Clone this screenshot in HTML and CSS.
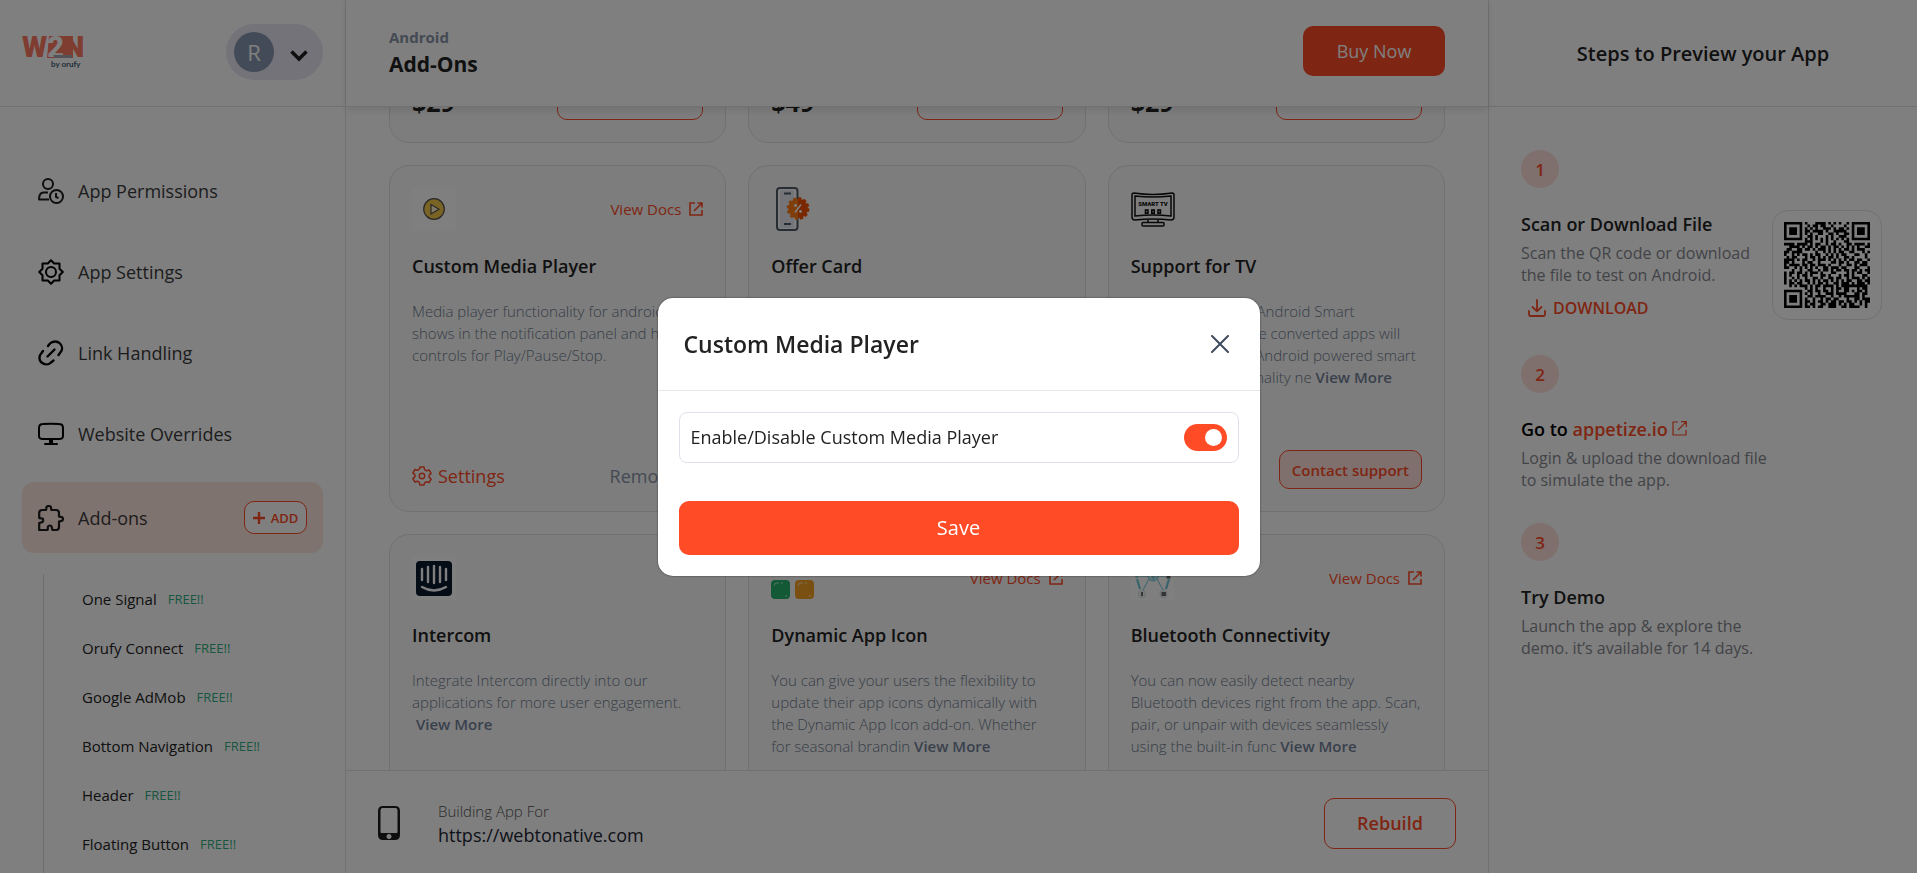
FILE: index.html
```html
<!DOCTYPE html>
<html lang="en">
<head>
<meta charset="utf-8">
<title>Add-Ons</title>
<link rel="stylesheet" href="styles.css">
</head>
<body>
<svg class="sprite" aria-hidden="true">
  <symbol id="i-ext" viewBox="0 0 14 14"><path d="M6 1H1v12h12V8M8.500 1H13v4.500M13 1 5 9" fill="none" stroke="currentColor" stroke-width="1.600"/></symbol>
</svg>
<div class="app">
  <aside class="sidebar">
    <div class="brand">
      <svg class="logo" viewBox="0 0 64 35" role="img" aria-label="W2N by orufy">
        <path d="M27 1h24v22H25z" fill="#ff7862"/>
        <text x="0" y="22" font-family="Roboto, sans-serif" font-weight="900" font-size="29" fill="#ff7862">W<tspan fill="#fff">2</tspan>N</text>
        <path d="M31 20h19v3H33z" fill="#a9a5ae"/>
        <text x="29" y="32" font-family="Lato, sans-serif" font-weight="700" font-size="8" fill="#3f5b78">by orufy</text>
      </svg>
      <button class="account" aria-label="Account"><span class="avatar">R</span>
        <svg width="20" height="20" viewBox="0 0 20 20"><path d="m2.500 9.500 7.500 7.500 7.500-7.500" fill="none" stroke="#1c1c1e" stroke-width="3.400"/></svg>
      </button>
    </div>
    <nav class="nav">
      <a class="nav-item" href="#">
        <svg class="nav-icon" viewBox="0 0 26 26" fill="none" stroke="#1c1c1e" stroke-width="2"><circle cx="10" cy="6" r="5"/><circle cx="18.500" cy="18.500" r="6.500"/><path d="M18 15v4l2.500 1M10 14.500H5.500c-3 0-4.500 3-4.500 7h10" stroke-linejoin="round"/></svg>
        App Permissions</a>
      <a class="nav-item" href="#">
        <svg class="nav-icon" viewBox="0 0 26 26" fill="none" stroke="#000" stroke-width="2" stroke-linejoin="round"><circle cx="13" cy="13" r="5"/><path d="m13 1.200 3.200 3.300h5.300v5.300l3.300 3.200-3.300 3.200v5.300h-5.300L13 24.800l-3.200-3.300H4.500v-5.300L1.200 13l3.300-3.200V4.500h5.300z"/></svg>
        App Settings</a>
      <a class="nav-item" href="#">
        <svg class="nav-icon" viewBox="0 0 26 26" fill="none" stroke="#000" stroke-width="2.400" stroke-linecap="round"><path d="m9.500 16.500 7-7M10 6l2-2.500c2.500-2.500 7-3 10 0s2.500 7 0 9.500L20.500 15M5 11l-1.500 2c-2.500 2.500-3 7 0 9.500s7 2.500 9.500 0l2.500-2"/></svg>
        Link Handling</a>
      <a class="nav-item" href="#">
        <svg class="nav-icon" viewBox="0 0 26 26" fill="none" stroke="#000" stroke-width="2"><path d="M5 3q8-.6 16 0 4 0 4 4v8q0 3-4 3H5q-4 0-4-3V7q0-4 4-4z"/><path d="M13 18v4" stroke-width="4"/><path d="M7 23h12" stroke-linecap="round"/></svg>
        Website Overrides</a>
      <div class="nav-item is-active">
        <svg class="nav-icon" viewBox="0 0 26 26" fill="none" stroke="#1c1c1e" stroke-width="2.200" stroke-linejoin="round"><path d="M1.200 8q0-3 3-3H8c1-1-1-4 2.700-4s1.700 3 2.700 4H18q3 0 3 3v3.500c1 1 4-.8 4 2.500s-3 1.500-4 2.500V22q0 3-3 3h-3.500c-1-1 .5-4.500-2.700-4.500S10.500 24 9.500 25H1.200v-7c1-1 4 .5 4-2.700s-3-1.300-4-2.300z"/></svg>
        <a href="#">Add-ons</a>
        <button class="add"><svg width="12" height="12" viewBox="0 0 12 12"><path d="M6 0v12M0 6h12" stroke="currentColor" stroke-width="2.400"/></svg>ADD</button>
      </div>
      <ul class="subnav">
        <li><a href="#">One Signal</a><span>FREE!!</span></li>
        <li><a href="#">Orufy Connect</a><span>FREE!!</span></li>
        <li><a href="#">Google AdMob</a><span>FREE!!</span></li>
        <li><a href="#">Bottom Navigation</a><span>FREE!!</span></li>
        <li><a href="#">Header</a><span>FREE!!</span></li>
        <li><a href="#">Floating Button</a><span>FREE!!</span></li>
      </ul>
    </nav>
  </aside>

  <main class="main">
    <header class="topbar">
      <div><p class="platform">Android</p><h1 class="page-title">Add-Ons</h1></div>
      <button class="buy">Buy Now</button>
    </header>
    <div class="scroller" id="scroller">
      <div class="cards">
        <article class="card"><div class="card-foot priced"><b class="price">$29</b><button class="outline" aria-label="Add"></button></div></article>
        <article class="card"><div class="card-foot priced"><b class="price">$49</b><button class="outline" aria-label="Add"></button></div></article>
        <article class="card"><div class="card-foot priced"><b class="price">$29</b><button class="outline" aria-label="Add"></button></div></article>

        <article class="card">
          <div class="card-head">
            <svg class="card-icon" viewBox="0 0 44 44"><path d="M0 0h44v44H0z" fill="#fff"/><circle cx="22" cy="22" r="10.300" fill="#f2c84b" stroke="#55504a" stroke-width="1.200"/><path d="M19 17.500v9.500l8-4.700z" fill="#fff5d0" stroke="#55504a" stroke-width="1.200"/></svg>
            <a class="docs" href="#">View Docs <svg width="14" height="14"><use href="#i-ext"/></svg></a>
          </div>
          <h2>Custom Media Player</h2>
          <p>Media player functionality for android<br>shows in the notification panel and has<br>controls for Play/Pause/Stop.</p>
          <div class="card-foot">
            <a class="settings" href="#"><svg width="20" height="20" viewBox="0 0 20 20" fill="none" stroke="currentColor" stroke-width="1.500" stroke-linejoin="round"><circle cx="10" cy="10" r="2.700"/><path d="M8 1h4l.6 2.700 1.900 1.100 2.600-.8 2 3.400-2 1.900v1.900l2 1.900-2 3.400-2.600-.8-1.900 1.100L12 19H8l-.6-2.700-1.900-1.100-2.600.8-2-3.400 2-1.900V8.800l-2-1.900 2-3.400 2.600.8 1.900-1.100z"/></svg>Settings</a>
            <a class="remove" href="#">Remove</a>
          </div>
        </article>
        <article class="card">
          <div class="card-head">
            <svg class="card-icon" viewBox="0 0 44 44"><rect x="6" y="1" width="20.500" height="42" rx="3" fill="#fff" stroke="#505a68" stroke-width="2"/><path d="M16 3v38" stroke="#e6ebf2" stroke-width="14"/><path d="M13 6.500h7M13 37h7" stroke="#505a68" stroke-width="2.200"/><circle cx="27" cy="21.500" r="9.800" fill="#ff7a12" stroke="#ff7a12" stroke-width="3" stroke-dasharray="3 2.130"/><path d="M27 11.700a9.800 9.800 0 0 1 0 19.600z" fill="#f25100"/><path d="M27 11.700a9.800 9.800 0 0 1 0 19.600" fill="none" stroke="#f25100" stroke-width="3" stroke-dasharray="3 2.130"/><path d="m24 25.500 6-8" stroke="#fff" stroke-width="1.600"/><circle cx="24.500" cy="18.500" r="1.400" fill="#fff"/><circle cx="29.500" cy="24.500" r="1.400" fill="#fff"/></svg>
          </div>
          <h2>Offer Card</h2>
        </article>
        <article class="card">
          <div class="card-head">
            <svg class="card-icon" viewBox="0 0 44 44" fill="none" stroke="#111" stroke-width="1.500"><path d="M3 6q19 3 38 0 2 0 2 2v22q0 3-3 3-18-2-36 0-3 0-3-3V8q0-2 2-2zM4 9q18 2 36 0v20q-18-2-36 0zM17 33v3M27 33v3"/><rect x="11" y="35.500" width="22" height="3.500" rx="1"/><text x="22" y="19" text-anchor="middle" font-family="Roboto, sans-serif" font-weight="900" font-size="6" fill="#111" stroke="none">SMART TV</text><g stroke-width="1.600"><rect x="14.500" y="23" width="2.400" height="3.200"/><rect x="20.800" y="23" width="2.400" height="3.200"/><rect x="27" y="23" width="2.400" height="3.200"/></g></svg>
          </div>
          <h2>Support for TV</h2>
          <p>Reach all users on Android Smart<br>TVs as well. Now the converted apps will<br>also run on all the Android powered smart<br>TVs with all functionality ne <b>View More</b></p>
          <div class="card-foot end"><button class="contact">Contact support</button></div>
        </article>

        <article class="card">
          <div class="card-head">
            <svg class="card-icon" viewBox="0 0 44 44"><path d="M0 0h44v44H0z" fill="#fff"/><rect x="4" y="5" width="36" height="35" rx="4" fill="#08182c"/><path d="M10 13v11M16 11v15M22 10v17M28 11v15M34 13v11M10 31q12 7 24 0" fill="none" stroke="#fff" stroke-width="2.400" stroke-linecap="round"/></svg>
          </div>
          <h2>Intercom</h2>
          <p>Integrate Intercom directly into our<br>applications for more user engagement.<br>&nbsp;<b>View More</b></p>
        </article>
        <article class="card">
          <div class="card-head">
            <svg class="card-icon" viewBox="0 0 44 44"><rect x="0" y="0" width="19" height="19" rx="4" fill="#3b82f6"/><rect x="24" y="0" width="19" height="19" rx="4" fill="#ef4444"/><rect x="0" y="24" width="19" height="19" rx="4" fill="#26b26b"/><rect x="24" y="24" width="19" height="19" rx="4" fill="#f3a024"/><path d="M3 30q0-3 3-3h2M10 27h2M27 30q0-3 3-3h2M34 27h2M14 40h2M38 40h2" fill="none" stroke="#fff" stroke-opacity=".6"/></svg>
            <a class="docs" href="#">View Docs <svg width="14" height="14"><use href="#i-ext"/></svg></a>
          </div>
          <h2>Dynamic App Icon</h2>
          <p>You can give your users the flexibility to<br>update their app icons dynamically with<br>the Dynamic App Icon add-on. Whether<br>for seasonal brandin <b>View More</b></p>
        </article>
        <article class="card">
          <div class="card-head">
            <svg class="card-icon" viewBox="0 0 44 44"><path d="M0 0h44v44H0z" fill="#fff"/><g fill="none" stroke="#6fc7d6"><circle cx="22" cy="20" r="5" fill="#c9eef4"/><path d="M20 17.500l4 4-2 2v-7l2 2-4 4M18 23l-6 11M26 23l6 11M17 20h-8M27 20h8M22 15V7"/><path d="M6 23l3 10M38 23l-3 10M7 14l4-6M37 14l-4-6" stroke-width="2.200"/></g><g fill="#f3f6f7" stroke="#cfe0e4"><circle cx="11" cy="38" r="3.600"/><circle cx="32.500" cy="38" r="3.600"/></g><path d="M10 36h2v4h-2zM30.500 36h4.500v4h-4.500zM35.500 18.500h4v4h-4z" fill="#666"/><circle cx="6" cy="20" r="2" fill="#8ed4df"/></svg>
            <a class="docs" href="#">View Docs <svg width="14" height="14"><use href="#i-ext"/></svg></a>
          </div>
          <h2>Bluetooth Connectivity</h2>
          <p>You can now easily detect nearby<br>Bluetooth devices right from the app. Scan,<br>pair, or unpair with devices seamlessly<br>using the built-in func <b>View More</b></p>
        </article>
      </div>
    </div>
    <footer class="build">
      <svg width="22" height="34" viewBox="0 0 22 34"><path fill-rule="evenodd" d="M5 0h12q5 0 5 5v24q0 5-5 5H5q-5 0-5-5V5q0-5 5-5zM4.500 2Q2.500 2 2.500 5v21q0 1 1 1h15q1 0 1-1V5q0-3-2-3zM11 28a2.500 2.500 0 1 0 .01 0z" fill="#1c1c1e"/></svg>
      <div class="build-text"><p>Building App For</p><strong>https://webtonative.com</strong></div>
      <button class="rebuild">Rebuild</button>
    </footer>
  </main>

  <aside class="steps">
    <h2 class="steps-title">Steps to Preview your App</h2>
    <ol class="steps-list">
      <li>
        <span class="num">1</span>
        <div class="scan">
          <div><h3>Scan or Download File</h3>
            <p>Scan the QR code or download<br>the file to test on Android.</p>
            <button class="download"><svg width="18" height="18" viewBox="0 0 18 18" fill="none" stroke="currentColor" stroke-width="1.800" stroke-linecap="round" stroke-linejoin="round"><path d="M9 1v11M4.500 8 9 12.300 13.500 8M1 12v3.500Q1 17 2.500 17h13q1.500 0 1.500-1.500V12"/></svg>DOWNLOAD</button>
          </div>
          <div class="qr"><svg viewBox="0 0 33 33" role="img" aria-label="QR code"><path id="qr-path"/></svg></div>
        </div>
      </li>
      <li>
        <span class="num">2</span>
        <h3 class="goto">Go to <a href="#">appetize.io <svg width="15" height="15" viewBox="0 0 15 15"><path d="M6 1H1v13h13V9M9 .7h5.300V6M14.300.7 6 9" fill="none" stroke="currentColor" stroke-width="1.200"/></svg></a></h3>
        <p>Login &amp; upload the download file<br>to simulate the app.</p>
      </li>
      <li>
        <span class="num">3</span>
        <h3>Try Demo</h3>
        <p>Launch the app &amp; explore the<br>demo. it’s available for 14 days.</p>
      </li>
    </ol>
  </aside>
</div>

<div class="overlay">
  <section class="modal" role="dialog" aria-labelledby="modal-title">
    <header class="modal-head">
      <h2 id="modal-title">Custom Media Player</h2>
      <button class="close" aria-label="Close"><svg width="18" height="18" viewBox="0 0 18 18"><path d="m1 1 16 16M17 1 1 17" stroke="#3f4a5a" stroke-width="2" stroke-linecap="round"/></svg></button>
    </header>
    <div class="modal-body">
      <label class="option" for="enable">Enable/Disable Custom Media Player<input class="toggle" id="enable" type="checkbox" checked></label>
      <button class="save">Save</button>
    </div>
  </section>
</div>
<script src="app.js"></script>
</body>
</html>
```

FILE: styles.css
```css
* { box-sizing: border-box; }
body, h1, h2, h3, p, ol, ul { margin: 0; padding: 0; }
ol, ul { list-style: none; }
body { font-family: "Open Sans", "Noto Sans", sans-serif; font-size: 16px; color: #222; background: #fff; }
a { color: inherit; text-decoration: none; }
button { font: inherit; color: inherit; background: none; border: 0; padding: 0; cursor: pointer; }
svg { flex: none; }
.sprite { display: none; }

.app { display: grid; grid-template-columns: 346px 1fr 429px; height: 100vh; overflow: hidden; }

.sidebar { border-right: 1px solid #e2e2e2; overflow: hidden; }
.brand { display: flex; align-items: center; justify-content: space-between; height: 107px; padding: 0 22px 2px; border-bottom: 1px solid #e2e2e2; }
.logo { width: 64px; height: 35px; overflow: visible; }
.account { display: flex; align-items: center; gap: 15px; width: 97px; height: 56px; padding: 0 8px; border-radius: 28px; background: #e6e7f2; }
.avatar { width: 40px; height: 40px; border-radius: 50%; background: #8797b0; color: #fff; font-size: 22px; line-height: 40px; }
.nav { display: flex; flex-direction: column; gap: 10px; padding: 48px 22px 0; }
.nav-item { display: flex; align-items: center; gap: 14px; height: 71px; padding: 0 16px; font-size: 18px; color: #3a3a3c; }
.nav-icon { width: 26px; height: 26px; }
.is-active { background: #ffe6df; border-radius: 12px; margin-top: 3px; }
.add { display: flex; align-items: center; justify-content: center; gap: 6px; width: 63px; height: 33px; margin-left: auto; border: 1px solid #ff4b26; border-radius: 10px; background: #fff; color: #ff4b26; font-size: 13px; font-weight: 600; }
.subnav { margin: 11px 0 0 21px; padding: 0 0 22px 38px; border-left: 1px solid #dcdcdc; }
.subnav li { display: flex; align-items: center; gap: 11px; height: 49px; font-size: 15px; }
.subnav span { font-size: 13px; color: #2fae7f; }

.main { display: flex; flex-direction: column; min-width: 0; min-height: 0; }
.topbar { position: relative; display: flex; align-items: center; justify-content: space-between; height: 107px; flex: none; padding: 0 43px 4px; border-bottom: 1px solid #e2e2e2; box-shadow: 0 3px 8px rgba(0, 0, 0, .1); }
.platform { font-size: 15px; font-weight: 700; line-height: 26px; color: #8894a8; }
.page-title { font-size: 21px; font-weight: 700; line-height: 28px; }
.buy { width: 142px; height: 50px; border-radius: 10px; background: #ff4b26; color: #fff; font-size: 18px; }
.scroller { flex: 1; min-height: 0; overflow: hidden; }
.cards { display: grid; grid-template-columns: repeat(3, 1fr); gap: 22px; padding: 22px 43px; }
.card { display: flex; flex-direction: column; height: 347px; padding: 21px 22px 22px; border: 1px solid #e2e2e2; border-radius: 20px; background: #fafafa; }
.card-head { display: flex; align-items: center; justify-content: space-between; height: 44px; }
.card-icon { width: 44px; height: 44px; }
.card h2 { margin-top: 22px; font-size: 18px; font-weight: 600; line-height: 27px; }
.card p { margin-top: 20px; font-size: 15px; font-weight: 300; line-height: 22px; color: #6f7c8f; white-space: nowrap; }
.card p b { font-weight: 600; color: #74829a; }
.card-foot { display: flex; align-items: center; justify-content: space-between; margin-top: auto; }
.card-foot.end { justify-content: flex-end; }
.card-foot.priced { align-items: flex-end; }
.price { font-size: 25px; line-height: 36px; }
.outline { width: 146px; height: 50px; border: 1px solid #ff4b26; border-radius: 10px; }
.docs { display: flex; align-items: center; gap: 8px; font-size: 15px; color: #ff4b26; }
.settings { display: flex; align-items: center; gap: 6px; font-size: 18px; line-height: 26px; color: #ff4b26; }
.remove { padding-right: 26px; font-size: 18px; line-height: 26px; color: #8894a8; }
.contact { height: 39px; padding: 0 12px; border: 1px solid #ff4b26; border-radius: 10px; background: #ffe0dc; color: #ff4b26; font-size: 15px; font-weight: 600; }
.build { display: flex; align-items: center; flex: none; height: 103px; padding: 2px 32px 0; border-top: 1px solid #e2e2e2; }
.build-text { margin-left: 38px; font-size: 15px; }
.build-text p { font-weight: 300; line-height: 24px; color: #555; }
.build-text strong { font-size: 18px; font-weight: 400; line-height: 24px; color: #1c2433; }
.rebuild { width: 132px; height: 51px; margin-left: auto; border: 1px solid #ff4b26; border-radius: 10px; color: #ff4b26; font-size: 18px; font-weight: 600; }

.steps { border-left: 1px solid #e2e2e2; }
.steps-title { display: flex; align-items: center; justify-content: center; height: 107px; border-bottom: 1px solid #e2e2e2; font-size: 20px; font-weight: 600; }
.steps-list { padding: 43px 35px 0 32px; }
.steps-list li { margin-bottom: 32px; }
.num { display: flex; align-items: center; justify-content: center; width: 38px; height: 38px; margin-bottom: 22px; border-radius: 50%; background: #ffe0dc; color: #ff4b26; font-size: 17px; font-weight: 600; }
.steps-list h3 { font-size: 18px; font-weight: 600; line-height: 28px; margin-bottom: 4px; }
.steps-list h3.goto { color: #000; }
.goto a { color: #ff4b26; }
.steps-list p { font-size: 16px; line-height: 22px; color: #85878f; }
.scan { display: flex; justify-content: space-between; align-items: flex-start; }
.download { display: flex; align-items: center; gap: 7px; margin: 7px 0 0 7px; color: #ff4b26; font-size: 16px; font-weight: 600; line-height: 30px; }
.qr { width: 110px; height: 110px; padding: 11px; border: 1px solid #e2e2e2; border-radius: 16px; }
.qr svg { display: block; width: 86px; height: 86px; }

.overlay { position: fixed; inset: 0; display: flex; align-items: center; justify-content: center; background: rgba(0, 0, 0, .5); }
.modal { width: 602px; border-radius: 15px; background: #fff; box-shadow: 0 0 2px rgba(0, 0, 0, .6); }
.modal-head { display: flex; align-items: center; justify-content: space-between; height: 93px; padding: 0 31px 0 26px; border-bottom: 1px solid #e5e7eb; }
.modal-head h2 { font-size: 23px; font-weight: 600; }
.close { display: flex; }
.modal-body { padding: 21px; }
.option { display: flex; align-items: center; justify-content: space-between; height: 51px; padding: 0 11px; border: 1px solid #dfe2ea; border-radius: 8px; font-size: 18px; }
.toggle { appearance: none; display: flex; align-items: center; justify-content: flex-end; width: 43px; height: 27px; margin: 0; padding: 0 5px; border-radius: 14px; background: #ff4b26; }
.toggle::before { content: ""; width: 17px; height: 17px; border-radius: 50%; background: #fff; }
.save { display: block; width: 100%; height: 54px; margin-top: 38px; border-radius: 10px; background: #ff4b26; color: #fff; font-size: 20px; }
```

FILE: app.js
```js
document.getElementById("scroller").scrollTop = 333;

const rows = [
  "#######.#...####.#.#.#..#.#######",
  "#.....#..#.##.##..#....#..#.....#",
  "#.###.#.#.#.#..###.#.##.#.#.###.#",
  "#.###.#.##.####.#..#####..#.###.#",
  "#.###.#.#.#..##..##.#..##.#.###.#",
  "#.....#..##.#...#.#..###..#.....#",
  "#######.#.#.#.#.#.#.#.#.#.#######",
  "........###...#.#..#...##........",
  "####.####.#.##..#.##.#..##.####.#",
  "..####.#.##.#.##.#.##.#.#.#.#..##",
  ".##..##.##.#.###.#.#.#.##.#.###..",
  "##.####.....#..#.#.#.##..##...#.#",
  "#..#.#.##.#.##..#.#.#.##...##..#.",
  ".#.##...#.##.#.#.##.#..##.#....#.",
  "####.#.##..#.###.#.#.#.#.##.##..#",
  "##.#...#.##..#....##.##.#..##.##.",
  "#.####.##.##.###.#...#..##.#.###.",
  "##..#.#.#.#.#..##.###.##...##...#",
  "...#..#..##..#.##.#.##.##.##.#.##",
  "#.##.##.#.###.#...##....#.#.##..#",
  "#.#..#.##.#...##.#...#.##.#...##.",
  "#..#.#..#..##.#..##.##..#.###.#.#",
  "#.#.#.#.##.#.#.##.#.#.#.##..##.##",
  "#.##.##..#.#.##.#..##.###.#.###.#",
  "..#.#.###.#.##.####.#.##########.",
  "........#.#.#..#..#.##.##...#.##.",
  "#######..##.##.##.#.#..##.#.##.#.",
  "#.....#.#.#..#..###.####...##.##.",
  "#.###.#..##.####..#..#.######.#..",
  "#.###.#.#..#..#.##.##...#..##.###",
  "#.###.#.##.#.##.#.##.##.##.#.#.##",
  "#.....#.#.##..##.###.#.#.##..#.#.",
  "#######.##.#.##..###..##.####..#."
];

let d = "";
rows.forEach((row, y) => {
  for (const run of row.matchAll(/#+/g)) {
    d += `M${run.index} ${y}h${run[0].length}v1h-${run[0].length}z`;
  }
});
document.getElementById("qr-path").setAttribute("d", d);
```
